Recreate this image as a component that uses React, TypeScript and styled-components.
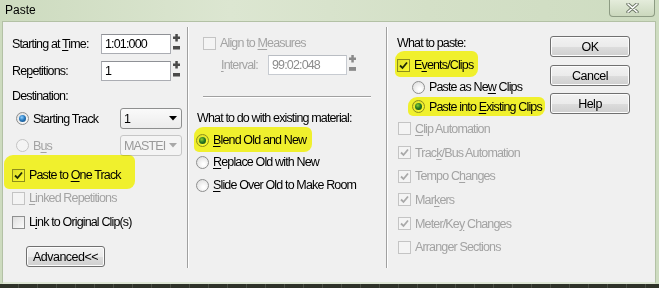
import React from 'react'
import styled, { createGlobalStyle, css } from 'styled-components'

const Global = createGlobalStyle`
  html, body {
    margin: 0;
    padding: 0;
    background: #d3dfc6;
  }
  body {
    font-family: "Liberation Sans", Arial, sans-serif;
    font-size: 12.5px;
    letter-spacing: -0.85px;
    color: #000;
  }
`

const Window = styled.div`
  width: 659px;
  height: 288px;
  display: flex;
  flex-direction: column;
  overflow: hidden;
  background: linear-gradient(90deg, #cddbbf 0%, #dce6d1 35%, #d4e0c7 65%, #cedcc1 100%);
`

const TitleBar = styled.div`
  height: 21px;
  display: flex;
  align-items: flex-start;
  padding-left: 5px;
  flex-shrink: 0;
`

const Title = styled.div`
  font-size: 12px;
  line-height: 20px;
  letter-spacing: 0;
`

const CloseBtn = styled.div`
  margin-left: auto;
  margin-right: 4px;
  width: 44px;
  height: 16px;
  border: 1px solid #8d9b83;
  border-top: none;
  border-radius: 0 0 4px 4px;
  background: linear-gradient(#e4ecdb, #cbd8bd);
  display: flex;
  align-items: center;
  justify-content: center;
`

const Body = styled.div`
  flex: 1;
  margin: 0 3px 0 2px;
  background: #f0f0f0;
  border: 1px solid #b3c1a5;
  border-bottom: 2px solid #dfe7d6;
  display: flex;
`

const BottomStrip = styled.div`
  height: 4px;
  flex-shrink: 0;
  background: repeating-linear-gradient(90deg, #2f3329 0 18px, #4a4e44 18px 19px);
`

const Column = styled.div<{ $w?: number; $pl: number; $pt: number }>`
  ${(p) => (p.$w ? css`width: ${p.$w}px;` : css`flex: 1;`)}
  flex-shrink: 0;
  box-sizing: border-box;
  padding-left: ${(p) => p.$pl}px;
  padding-top: ${(p) => p.$pt}px;
  display: flex;
  flex-direction: column;
  align-items: flex-start;
`

const VDivider = styled.div`
  width: 0;
  border-left: 1px solid #a0a0a0;
  border-right: 1px solid #fff;
  margin: 5px 0 14px;
`

const HDivider = styled.div`
  width: 168px;
  height: 0;
  border-top: 1px solid #a0a0a0;
  border-bottom: 1px solid #fff;
  margin: 21px 0 0 6px;
`

const Row = styled.div<{ $h: number; $mt?: number; $ml?: number }>`
  height: ${(p) => p.$h}px;
  margin-top: ${(p) => p.$mt ?? 0}px;
  margin-left: ${(p) => p.$ml ?? 0}px;
  display: flex;
  align-items: center;
  white-space: nowrap;
  position: relative;
`

const Label = styled.span<{ $w?: number; $disabled?: boolean }>`
  ${(p) => p.$w && css`width: ${p.$w}px; flex-shrink: 0;`}
  color: ${(p) => (p.$disabled ? '#a3a3a3' : '#000')};
`

const Key = styled.span`
  text-decoration: underline;
  text-underline-offset: 2px;
`

const Highlight = styled.div<{ $t: number; $r: number; $b: number; $l: number }>`
  position: relative;
  &::after {
    content: '';
    position: absolute;
    top: ${(p) => p.$t}px;
    right: ${(p) => p.$r}px;
    bottom: ${(p) => p.$b}px;
    left: ${(p) => p.$l}px;
    background: #ffff30;
    mix-blend-mode: multiply;
    border-radius: 9px 6px 8px 5px;
    pointer-events: none;
  }
`

const TextBox = styled.div<{ $w: number; $disabled?: boolean }>`
  width: ${(p) => p.$w}px;
  height: 20px;
  box-sizing: border-box;
  border: 1px solid ${(p) => (p.$disabled ? '#c7cbd1' : '#abadb3')};
  border-top-color: ${(p) => (p.$disabled ? '#b9bdc3' : '#8f9196')};
  background: #fff;
  padding-left: 3px;
  line-height: 18px;
  color: ${(p) => (p.$disabled ? '#8c8c8c' : '#000')};
`

const SpinWrap = styled.div`
  margin-left: 2px;
  display: flex;
  align-items: center;
  height: 20px;
`

const Select = styled.div<{ $disabled?: boolean }>`
  width: 62px;
  height: 21px;
  box-sizing: border-box;
  border: 1px solid ${(p) => (p.$disabled ? '#c6c6c6' : '#8e8f8f')};
  border-radius: 3px;
  background: ${(p) => (p.$disabled ? '#f4f4f4' : 'linear-gradient(#fafafa, #ececec)')};
  display: flex;
  align-items: center;
  padding: 0 4px 0 3px;
  color: ${(p) => (p.$disabled ? '#9a9a9a' : '#000')};
  margin-left: auto;
`

const SelectText = styled.span`
  flex: 1;
  overflow: hidden;
`

const Box = styled.div<{ $disabled?: boolean; $round?: boolean }>`
  width: 13px;
  height: 13px;
  box-sizing: border-box;
  flex-shrink: 0;
  border: 1px solid ${(p) => (p.$disabled ? '#c4c4c4' : '#8e8f8f')};
  border-radius: ${(p) => (p.$round ? '50%' : '0')};
  background: ${(p) =>
    p.$disabled
      ? '#f4f4f4'
      : p.$round
      ? 'radial-gradient(circle at 60% 65%, #fff 10%, #dcdcdc 90%)'
      : 'linear-gradient(135deg, #dedede, #fbfbfb)'};
  display: flex;
  align-items: center;
  justify-content: center;
  margin-right: 4px;
`

const Dot = styled.div`
  width: 7px;
  height: 7px;
  border-radius: 50%;
  background: radial-gradient(circle at 40% 35%, #8fd0ff 0%, #2a7bc0 45%, #0d3f6e 100%);
`

const Button = styled.div<{ $w: number; $mt?: number; $ml?: number }>`
  width: ${(p) => p.$w}px;
  height: 21px;
  box-sizing: border-box;
  margin-top: ${(p) => p.$mt ?? 0}px;
  margin-left: ${(p) => p.$ml ?? 0}px;
  border: 1px solid #707070;
  border-radius: 3px;
  background: linear-gradient(#f2f2f2 0%, #ebebeb 50%, #dddddd 51%, #cfcfcf 100%);
  box-shadow: inset 0 0 0 1px #fcfcfc;
  display: flex;
  align-items: center;
  justify-content: center;
  letter-spacing: -0.5px;
`

const Check = ({ disabled }: { disabled?: boolean }) => (
  <svg width="9" height="9" viewBox="0 0 9 9">
    <path
      d="M1 4.5 L3.5 7 L8 1.5"
      fill="none"
      stroke={disabled ? '#a9a9a9' : '#1f2a1f'}
      strokeWidth="1.8"
    />
  </svg>
)

const CheckBox = ({ checked, disabled }: { checked?: boolean; disabled?: boolean }) => (
  <Box $disabled={disabled}>{checked && <Check disabled={disabled} />}</Box>
)

const Radio = ({ checked, disabled }: { checked?: boolean; disabled?: boolean }) => (
  <Box $round $disabled={disabled}>
    {checked && <Dot />}
  </Box>
)

const Spinner = ({ disabled }: { disabled?: boolean }) => {
  const c = disabled ? '#8a8a8a' : '#4a4a4a'
  return (
    <SpinWrap>
      <svg width="7" height="20" viewBox="0 0 7 20">
        <rect x="0" y="2.5" width="7" height="2.5" fill={c} />
        <rect x="2.3" y="0" width="2.5" height="7.5" fill={c} />
        <rect x="0" y="12" width="7" height="3" fill={c} />
        <rect x="0" y="15" width="7" height="1" fill="#9a9a9a" />
      </svg>
    </SpinWrap>
  )
}

const Arrow = ({ disabled }: { disabled?: boolean }) => (
  <svg width="8" height="5" viewBox="0 0 8 5">
    <path d="M0 0 H8 L4 4.5 Z" fill={disabled ? '#a8a8a8' : '#000'} />
  </svg>
)

export default function App() {
  return (
    <>
      <Global />
      <Window>
        <TitleBar>
          <Title>Paste</Title>
          <CloseBtn>
            <svg width="13" height="10" viewBox="0 0 13 10">
              <path
                d="M2 1 L11 9 M11 1 L2 9"
                stroke="#6f7a68"
                strokeWidth="3.4"
                strokeLinecap="round"
              />
              <path
                d="M2 1 L11 9 M11 1 L2 9"
                stroke="#fff"
                strokeWidth="1.6"
                strokeLinecap="round"
              />
            </svg>
          </CloseBtn>
        </TitleBar>
        <Body>
          <Column $w={184} $pl={9} $pt={12}>
            <Row $h={20}>
              <Label $w={89}>
                Starting at <Key>T</Key>ime:
              </Label>
              <TextBox $w={70}>1:01:000</TextBox>
              <Spinner />
            </Row>
            <Row $h={20} $mt={7}>
              <Label $w={89}>
                Re<Key>p</Key>etitions:
              </Label>
              <TextBox $w={70}>1</TextBox>
              <Spinner />
            </Row>
            <Row $h={16} $mt={7}>
              <Label>Destination:</Label>
            </Row>
            <Row $h={21} $mt={4} $ml={4} style={{ width: 166 }}>
              <Radio checked />
              <Label>
                Startin<Key>g</Key> Track
              </Label>
              <Select>
                <SelectText>1</SelectText>
                <Arrow />
              </Select>
            </Row>
            <Row $h={21} $mt={6} $ml={4} style={{ width: 166 }}>
              <Radio disabled />
              <Label $disabled>
                B<Key>u</Key>s
              </Label>
              <Select $disabled>
                <SelectText>MASTEI</SelectText>
                <Arrow disabled />
              </Select>
            </Row>
            <Highlight $t={-1} $r={-14} $b={-3} $l={-8}>
              <Row $h={22} $mt={8}>
                <CheckBox checked />
                <Label>
                  Paste to <Key>O</Key>ne Track
                </Label>
              </Row>
            </Highlight>
            <Row $h={22} $mt={1}>
              <CheckBox disabled />
              <Label $disabled>
                <Key>L</Key>inked Repetitions
              </Label>
            </Row>
            <Row $h={22} $mt={2}>
              <CheckBox />
              <Label>
                L<Key>i</Key>nk to Original Clip(s)
              </Label>
            </Row>
            <Button $w={79} $mt={13} $ml={14}>
              Advanced&lt;&lt;
            </Button>
          </Column>
          <VDivider />
          <Column $w={197} $pl={8} $pt={11}>
            <Row $h={20} $ml={6}>
              <CheckBox disabled />
              <Label $disabled>
                Align to <Key>M</Key>easures
              </Label>
            </Row>
            <Row $h={20} $mt={2} $ml={24}>
              <Label $w={47} $disabled>
                <Key>I</Key>nterval:
              </Label>
              <TextBox $w={79} $disabled>
                99:02:048
              </TextBox>
              <Spinner disabled />
            </Row>
            <HDivider />
            <Row $h={16} $mt={12}>
              <Label>What to do with existing material:</Label>
            </Row>
            <Highlight $t={1} $r={-6} $b={-1} $l={-3}>
              <Row $h={22} $mt={3} $ml={-1}>
                <Radio checked />
                <Label>
                  <Key>B</Key>lend Old and New
                </Label>
              </Row>
            </Highlight>
            <Row $h={22} $ml={-1}>
              <Radio />
              <Label>
                <Key>R</Key>eplace Old with New
              </Label>
            </Row>
            <Row $h={22} $mt={1} $ml={-1}>
              <Radio />
              <Label>
                <Key>S</Key>lide Over Old to Make Room
              </Label>
            </Row>
          </Column>
          <VDivider />
          <Column $w={157} $pl={9} $pt={13}>
            <Row $h={16}>
              <Label>What to paste:</Label>
            </Row>
            <Highlight $t={0} $r={-5} $b={-1} $l={-2}>
              <Row $h={22} $mt={3}>
                <CheckBox checked />
                <Label>
                  E<Key>v</Key>ents/Clips
                </Label>
              </Row>
            </Highlight>
            <Row $h={20} $mt={1} $ml={15}>
              <Radio />
              <Label>
                Paste as Ne<Key>w</Key> Clips
              </Label>
            </Row>
            <Highlight $t={0} $r={-3} $b={0} $l={11}>
              <Row $h={19} $ml={15}>
                <Radio checked />
                <Label>
                  Paste into <Key>E</Key>xisting Clips
                </Label>
              </Row>
            </Highlight>
            <Row $h={23.7} $mt={1} $ml={1}>
              <CheckBox disabled />
              <Label $disabled>
                <Key>C</Key>lip Automation
              </Label>
            </Row>
            <Row $h={23.7} $ml={1}>
              <CheckBox checked disabled />
              <Label $disabled>
                Trac<Key>k</Key>/Bus Automation
              </Label>
            </Row>
            <Row $h={23.7} $ml={1}>
              <CheckBox checked disabled />
              <Label $disabled>
                Tempo C<Key>h</Key>anges
              </Label>
            </Row>
            <Row $h={23.7} $ml={1}>
              <CheckBox checked disabled />
              <Label $disabled>
                Mar<Key>k</Key>ers
              </Label>
            </Row>
            <Row $h={23.7} $ml={1}>
              <CheckBox checked disabled />
              <Label $disabled>
                Meter/Ke<Key>y</Key> Changes
              </Label>
            </Row>
            <Row $h={23.7} $ml={1}>
              <CheckBox disabled />
              <Label $disabled>Arranger Sections</Label>
            </Row>
          </Column>
          <Column $pl={5} $pt={14}>
            <Button $w={80}>OK</Button>
            <Button $w={80} $mt={8}>
              Cancel
            </Button>
            <Button $w={80} $mt={7}>
              Help
            </Button>
          </Column>
        </Body>
        <BottomStrip />
      </Window>
    </>
  )
}
